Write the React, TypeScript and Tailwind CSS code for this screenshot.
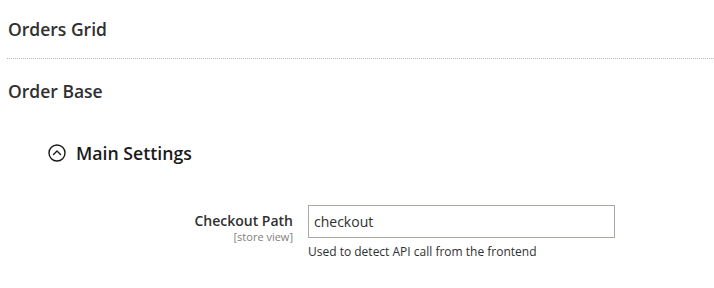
export default function App() {
  return (
    <div className="h-[288px] w-[714px] overflow-hidden bg-white font-['Open_Sans',sans-serif] text-[#303030]">
      <div className="pl-2 pt-[17px]">
        <h2 className="text-[17.5px] font-semibold leading-[24px]">Orders Grid</h2>
      </div>
      <div className="ml-[7px] mt-[17px] border-t border-dotted border-[#b5b5b5]" />
      <div className="pl-2 pt-[20px]">
        <h2 className="text-[17.5px] font-semibold leading-[24px]">Order Base</h2>
      </div>
      <div className="flex items-center gap-[10px] pl-[48px] pt-[38px]">
        <ChevronCircle />
        <span className="text-[17.7px] font-semibold leading-[24px] text-[#1a1a1a]">Main Settings</span>
      </div>
      <div className="mt-[40px] flex">
        <div className="flex w-[293px] flex-col items-end pt-[6px]">
          <span className="text-[14px] font-semibold leading-[19px]">Checkout Path</span>
          <span className="text-[11px] leading-[14px] text-[#808080]">[store view]</span>
        </div>
        <div className="ml-[15px] flex flex-col">
          <div className="flex h-[33px] w-[307px] items-center border border-[#a6ab9e] px-[5px] text-[14px]">
            checkout
          </div>
          <p className="mt-[6px] text-[12px] leading-[16px]">Used to detect API call from the frontend</p>
        </div>
      </div>
    </div>
  );
}

function ChevronCircle() {
  return (
    <svg width="18" height="18" viewBox="0 0 18 18" fill="none" stroke="#1a1a1a" strokeWidth="1.4">
      <circle cx="9" cy="9" r="8" />
      <path d="M5.5 10.5 L9 7 L12.5 10.5" strokeLinecap="round" strokeLinejoin="round" />
    </svg>
  );
}
